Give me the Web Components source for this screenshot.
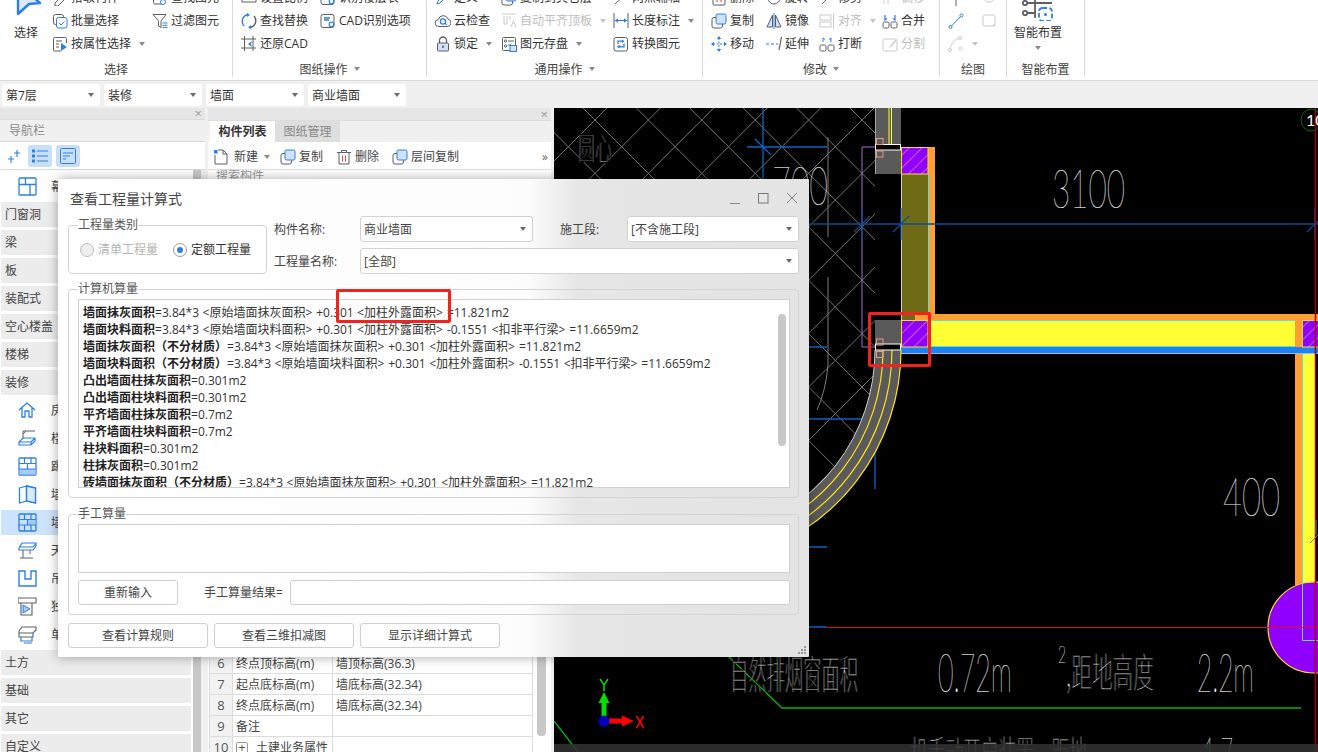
<!DOCTYPE html>
<html lang="zh">
<head>
<meta charset="utf-8">
<title>查看工程量计算式</title>
<style>
  html, body { margin: 0; height: 100%; overflow: hidden; }
  body { background: #f0f0f0; color: #333; font: 12px/17px "Open Sans", "Noto Sans CJK SC", sans-serif; }
  app-shell { width: 1318px; height: 752px; }
</style>
</head>
<body>
<app-shell>
  <x-ribbon slot="ribbon">
    <rb-group label="选择" w="233" pad="0">
      <rb-big w="52" icon="select" text="选择"></rb-big>
      <rb-col w="100">
        <rb-item icon="pick" text="拾取构件"></rb-item>
        <rb-item icon="batch" text="批量选择"></rb-item>
        <rb-item icon="attr" text="按属性选择" caret></rb-item>
      </rb-col>
      <rb-col w="80">
        <rb-item icon="find2" text="查找图元"></rb-item>
        <rb-item icon="filter" text="过滤图元"></rb-item>
      </rb-col>
    </rb-group>
    <rb-group label="图纸操作" w="194" pad="8" caret>
      <rb-col w="79">
        <rb-item icon="scale" text="设置比例"></rb-item>
        <rb-item icon="replace" text="查找替换"></rb-item>
        <rb-item icon="restore" text="还原CAD"></rb-item>
      </rb-col>
      <rb-col w="100">
        <rb-item icon="cadopt" text="识别楼层表"></rb-item>
        <rb-item icon="cadopt" text="CAD识别选项"></rb-item>
      </rb-col>
    </rb-group>
    <rb-group label="通用操作" w="276" pad="8" caret>
      <rb-col w="66">
        <rb-item icon="define" text="定义"></rb-item>
        <rb-item icon="cloud" text="云检查"></rb-item>
        <rb-item icon="lock" text="锁定" caret></rb-item>
      </rb-col>
      <rb-col w="112">
        <rb-item icon="copy" text="复制到其它层"></rb-item>
        <rb-item icon="flush" text="自动平齐顶板" caret disabled></rb-item>
        <rb-item icon="save" text="图元存盘" caret></rb-item>
      </rb-col>
      <rb-col w="85">
        <rb-item icon="axis" text="两点辅轴"></rb-item>
        <rb-item icon="dim" text="长度标注" caret></rb-item>
        <rb-item icon="conv" text="转换图元"></rb-item>
      </rb-col>
    </rb-group>
    <rb-group label="修改" w="237" pad="8" caret>
      <rb-col w="55">
        <rb-item icon="del" text="删除"></rb-item>
        <rb-item icon="copy" text="复制"></rb-item>
        <rb-item icon="move" text="移动"></rb-item>
      </rb-col>
      <rb-col w="53">
        <rb-item icon="rotate" text="旋转"></rb-item>
        <rb-item icon="mirror" text="镜像"></rb-item>
        <rb-item icon="extend" text="延伸"></rb-item>
      </rb-col>
      <rb-col w="63">
        <rb-item icon="trim" text="修剪"></rb-item>
        <rb-item icon="align" text="对齐" caret disabled></rb-item>
        <rb-item icon="break" text="打断"></rb-item>
      </rb-col>
      <rb-col w="50">
        <rb-item icon="offset" text="偏移" disabled></rb-item>
        <rb-item icon="merge" text="合并"></rb-item>
        <rb-item icon="split" text="分割" disabled></rb-item>
      </rb-col>
    </rb-group>
    <rb-group label="绘图" w="67" pad="8">
      <rb-col w="33">
        <rb-item icon="point"></rb-item>
        <rb-item icon="line"></rb-item>
        <rb-item icon="arc" caret disabled></rb-item>
      </rb-col>
      <rb-col w="20">
        <rb-item icon="circle" disabled></rb-item>
        <rb-item icon="rect" disabled></rb-item>
      </rb-col>
    </rb-group>
    <rb-group label="智能布置" w="78" pad="0">
      <rb-big w="62" icon="smart" text="智能布置" caret></rb-big>
    </rb-group>
  </x-ribbon>

  <x-filterbar slot="filters">
    <x-combo>第7层</x-combo>
    <x-combo>装修</x-combo>
    <x-combo>墙面</x-combo>
    <x-combo>商业墙面</x-combo>
  </x-filterbar>

  <x-nav slot="nav"></x-nav>
  <x-parts slot="parts"></x-parts>
  <x-cad slot="cad"></x-cad>

  <x-dialog slot="dialog" style="left:58px;top:179px">
    <div slot="title">查看工程量计算式</div>
    <x-quantity-form></x-quantity-form>
  </x-dialog>

  <x-mark slot="marks" style="left:336px;top:289px;width:115px;height:34px"></x-mark>
  <x-mark slot="marks" style="left:868px;top:312px;width:63px;height:55px"></x-mark>
</app-shell>

<script>
const BLUE = '#2b7fe8';
const DARK = '#5c5f66';
const PALE = '#c9c9c9';

// 16x16 icon bodies. "c" is the neutral colour so disabled items can go pale
const ICONS = {
  select: c => `<path d="M3 31V1l22 19-11 1z" fill="#dbe9fb" stroke="${BLUE}" stroke-width="2.4" stroke-linejoin="round"/>`,
  pick: c => `<path d="M3 13l6-6 3 3-6 6H3z" fill="none" stroke="${c}"/>`,
  newdoc: c => `<path d="M2 6V15h12V5l-4-4H5" fill="none" stroke="${c}"/><path d="M10 1v4h4" fill="none" stroke="${c}"/><path d="M1 1h3.500v3.500H1z" fill="${BLUE}"/>`,
  trash: c => `<path d="M1 3.500h14M5.500 3V1.500h5V3" fill="none" stroke="${c}"/><path d="M3 3.500V15h10V3.500" fill="none" stroke="${c}"/><path d="M6.500 6.500v6M9.500 6.500v6" stroke="#d84a4a"/>`,
  batch: c => `<rect x="1.5" y="1.5" width="10" height="10" rx="2" fill="none" stroke="${c}"/><rect x="4.5" y="4.5" width="10.5" height="10.5" rx="2" fill="#fff" stroke="${BLUE}"/><path d="M7 10l2 2 3.5-3.5" fill="none" stroke="${BLUE}"/>`,
  attr: c => `<path d="M9 15H2.5a1 1 0 0 1-1-1V2.5a1 1 0 0 1 1-1h11a1 1 0 0 1 1 1V7" fill="none" stroke="${c}"/><path d="M4 5h6M4 8h3M4 11h3" stroke="${c}"/><path d="M9 7l6 4-6 4z" fill="${BLUE}"/>`,
  find2: c => `<rect x="1.5" y="3" width="11" height="11" rx="1.5" fill="none" stroke="${c}"/><circle cx="11" cy="12" r="2.5" fill="#fff" stroke="${BLUE}"/>`,
  filter: c => `<path d="M1 1.5h13L9 8v6.5L6.500 13V8z" fill="none" stroke="${c}"/><path d="M10.500 10h5M10.500 12.300h5M10.500 14.600h5" stroke="${BLUE}"/>`,
  scale: c => `<path d="M1 12V4h14v8z" fill="none" stroke="${c}"/>`,
  replace: c => `<path d="M3 13A7 7 0 0 1 7 1.500" fill="none" stroke="${BLUE}" stroke-width="1.400"/><path d="M13 3A7 7 0 0 1 9 14.500" fill="none" stroke="${c}" stroke-width="1.400"/><path d="M6 0l3 2-3 2zM10 12l-3 2.500 3 1.500z" fill="${BLUE}"/>`,
  restore: c => `<path d="M3.500 0v15M0 12h15M0 3h15M12 0v15" stroke="${c}" fill="none"/><path d="M11 5L7 8l4 3-1-3z" fill="${BLUE}"/>`,
  cadopt: c => `<rect x="1" y="1.500" width="13" height="13" rx="2" fill="none" stroke="${c}"/><path d="M4 5h6M4 7h5" stroke="${BLUE}" stroke-width="1.500"/><circle cx="11.500" cy="11.500" r="2.300" fill="#fff" stroke="${BLUE}" stroke-width="1.200"/>`,
  define: c => `<path d="M2 14l3-1 8-8-2-2-8 8z" fill="none" stroke="${BLUE}"/>`,
  cloud: c => `<path d="M4 13.500a3.500 3.500 0 0 1-.6-7A5 5 0 0 1 13 6a3.800 3.800 0 0 1-.5 7.500z" fill="none" stroke="${c}"/><circle cx="8" cy="8.500" r="2.600" fill="none" stroke="${BLUE}" stroke-width="1.300"/><path d="M10 10.500l2 1.500" stroke="${BLUE}"/>`,
  lock: c => `<path d="M4.500 7V4.500a3.500 3.500 0 0 1 7 0V7" fill="none" stroke="${c}" stroke-width="1.300"/><rect x="2.500" y="7" width="11" height="8" rx="1" fill="#cfe2fa" stroke="${c}"/><path d="M8 9.500v2.500" stroke="${DARK}" stroke-width="1.600"/>`,
  flush: c => `<path d="M1 1h14M3 3v8h3V3M9 3v4" fill="none" stroke="${c}"/><path d="M10 14l2.500-6 2.500 6" fill="none" stroke="${c}"/>`,
  save: c => `<rect x="1.500" y="1.500" width="13" height="13" rx="1" fill="none" stroke="${c}"/><circle cx="4.500" cy="5" r="1.200" fill="none" stroke="${c}"/><circle cx="4.500" cy="10" r="1.200" fill="none" stroke="${c}"/><path d="M7 5h6M7 9h3" stroke="${c}"/><rect x="9" y="9.500" width="6.500" height="6" fill="#cfe2fa" stroke="${BLUE}"/>`,
  axis: c => `<path d="M2 14L14 3" stroke="${c}"/>`,
  dim: c => `<path d="M1 0v15M15 0v15" stroke="${c}"/><path d="M2 7.500h12" stroke="${BLUE}"/><path d="M2 7.500l3-2.200v4.400zM14 7.500l-3-2.200v4.400z" fill="${BLUE}"/>`,
  conv: c => `<rect x="1" y="1.500" width="13.500" height="13.500" rx="2" fill="none" stroke="${c}"/><path d="M5 8V5.200h4.500M4.500 10.500H8M11 7.500v3.300H7" fill="none" stroke="${BLUE}" stroke-width="1.300"/><path d="M9 3.500l2.500 1.700L9 7zM6.500 9l-2.500 1.700 2.500 1.800z" fill="${BLUE}"/>`,
  del: c => `<rect x="2" y="3" width="12" height="12" rx="1" fill="none" stroke="${c}"/><path d="M6 6v6M10 6v6" stroke="#e04040"/>`,
  copy: c => `<rect x="1" y="4.500" width="10.500" height="10.500" rx="2" fill="#fff" stroke="${c}"/><rect x="5" y="1" width="10" height="10" rx="1.500" fill="#cfe2fa" stroke="${BLUE}"/>`,
  move: c => `<path d="M8 2v12M2 8h12" stroke="${BLUE}" stroke-dasharray="2 1.500"/><path d="M8 0l2.200 3H5.800zM8 16l2.200-3H5.800zM0 8l3-2.200v4.400zM16 8l-3-2.200v4.400z" fill="${BLUE}"/>`,
  rotate: c => `<circle cx="8" cy="8" r="6" fill="none" stroke="${c}"/>`,
  mirror: c => `<path d="M6.500 2v12H1zM9.500 2v12H15z" fill="#cfe2fa" stroke="${c}"/><path d="M8 0v16" stroke="${BLUE}"/>`,
  extend: c => `<path d="M0 8h3M5 8h3M10 8h2" stroke="${BLUE}"/><path d="M13 14L15.500 1" stroke="${c}" stroke-width="1.200"/>`,
  trim: c => `<path d="M3 14L14 3" stroke="${c}"/>`,
  align: c => `<rect x="1" y="2" width="11" height="5" fill="none" stroke="${c}"/><rect x="1" y="9" width="11" height="5" fill="none" stroke="${c}"/><path d="M14.500 0v16" stroke="${c}"/>`,
  break: c => `<rect x="1" y="9" width="6" height="6" rx="1.500" fill="none" stroke="${c}"/><rect x="9" y="9" width="6" height="6" rx="1.500" fill="none" stroke="${c}"/><path d="M4 6V2l2 1.500M12 6V2l-2 1.500" fill="none" stroke="${BLUE}"/>`,
  offset: c => `<path d="M2 14V3M6 14V3" stroke="${c}"/>`,
  merge: c => `<rect x="1" y="9" width="6" height="6" rx="1.500" fill="none" stroke="${c}"/><rect x="9" y="9" width="6" height="6" rx="1.500" fill="none" stroke="${c}"/><path d="M3 2v5l2-1.500M13 2v5l-2-1.500" fill="none" stroke="${BLUE}" stroke-width="1.200"/>`,
  split: c => `<rect x="1" y="3" width="14" height="12" rx="1.500" fill="none" stroke="${c}"/><path d="M8 11l6-7" stroke="${c}" stroke-width="1.300"/>`,
  point: c => `<path d="M8 10V16" stroke="${c}"/>`,
  line: c => `<path d="M2.500 14L13.500 2.500" stroke="${BLUE}"/><circle cx="2.500" cy="14" r="1.500" fill="#fff" stroke="${BLUE}"/><circle cx="13.500" cy="2.500" r="1.500" fill="#fff" stroke="${BLUE}"/>`,
  arc: c => `<path d="M2 14C3 7 7 3 12 2" fill="none" stroke="${c}"/><circle cx="2" cy="14" r="1.500" fill="#fff" stroke="${c}"/><circle cx="12" cy="2" r="1.500" fill="#fff" stroke="${c}"/><circle cx="12.500" cy="12.500" r="1.500" fill="#fff" stroke="${c}"/>`,
  circle: c => `<circle cx="8" cy="6" r="6" fill="none" stroke="${c}"/>`,
  rect: c => `<rect x="2" y="2" width="12" height="11" rx="2" fill="none" stroke="${c}"/><circle cx="13" cy="12.500" r="1" fill="${c}"/>`,
  smart: c => `<g fill="none" stroke="${c}" stroke-width="1.800"><path d="M5 3h25M13 -2v20M5 13h8"/><circle cx="3" cy="3" r="2.200"/><circle cx="3" cy="13" r="2.200"/></g><rect x="17" y="8" width="13" height="13" rx="3.500" fill="none" stroke="${BLUE}" stroke-width="1.800" stroke-dasharray="4.500 2.300"/><circle cx="23.500" cy="14.500" r="1.500" fill="${BLUE}"/>`
};

function iconSvg(name, w, h, vb, color) {
  return `<svg width="${w}" height="${h}" viewBox="${vb || `0 0 ${w} ${h}`}" style="flex:none;display:block">${ICONS[name](color || DARK)}</svg>`;
}

// small base class: subclasses give css() and html()
class Shadow extends HTMLElement {
  connectedCallback() {
    if (this.shadowRoot) return;
    this.attachShadow({ mode: 'open' });
    this.shadowRoot.innerHTML = `<style>${this.css()}</style>${this.html()}`;
  }
  css() { return ''; }
  html() { return '<slot></slot>'; }
}

const CARET = 'display:inline-block;width:0;height:0;border:3.5px solid transparent;border-top:4px solid #8a8a8a;border-bottom:0;flex:none;';

class AppShell extends Shadow {
  css() {
    return `
      :host { display: flex; flex-direction: column; position: relative; overflow: hidden; background: #f0f0f0; }
      .main { display: flex; height: 644px; }
    `;
  }
  html() {
    return `
      <slot name="ribbon"></slot>
      <slot name="filters"></slot>
      <div class="main">
        <slot name="nav"></slot>
        <slot name="parts"></slot>
        <slot name="cad"></slot>
      </div>
      <slot name="dialog"></slot>
      <slot name="marks"></slot>
    `;
  }
}

class XRibbon extends Shadow {
  css() {
    return `:host { display: flex; height: 81px; flex: none; overflow: hidden; background: #fff; border-bottom: 1px solid #d9d9d9; box-sizing: border-box; font-size: 12px; line-height: 17px; color: #333; }`;
  }
}

class RbGroup extends Shadow {
  css() {
    const w = this.getAttribute('w');
    const pad = this.getAttribute('pad');
    return `
      :host { display: block; width: ${w}px; flex: none; box-sizing: border-box; height: 77px; border-right: 1px solid #d9d9d9; }
      .body { display: flex; height: 54px; padding-left: ${pad}px; }
      .inner { display: flex; margin-top: -14px; height: 69px; }
      .label { height: 18px; margin-top: 6px; display: flex; justify-content: center; align-items: center; gap: 6px; color: #444; }
      i { ${CARET} }
    `;
  }
  html() {
    const caret = this.hasAttribute('caret') ? '<i></i>' : '';
    return `<div class="body"><div class="inner"><slot></slot></div></div><div class="label">${this.getAttribute('label')}${caret}</div>`;
  }
}

class RbCol extends Shadow {
  css() { return `:host { display: flex; flex-direction: column; flex: none; width: ${this.getAttribute('w')}px; }`; }
}

class RbItem extends Shadow {
  css() {
    const off = this.hasAttribute('disabled');
    return `
      :host { display: flex; align-items: center; height: 23px; gap: 3px; white-space: nowrap; color: ${off ? '#bdbdbd' : '#333'}; }
      i { ${CARET} margin-left: 5px; ${off ? 'border-top-color:#c4c4c4;' : ''} }
    `;
  }
  html() {
    const off = this.hasAttribute('disabled');
    const text = this.getAttribute('text') || '';
    return `${iconSvg(this.getAttribute('icon'), 16, 16, null, off ? PALE : DARK)}${text ? `<span>${text}</span>` : ''}${this.hasAttribute('caret') ? '<i></i>' : ''}`;
  }
}

class RbBig extends Shadow {
  css() {
    return `
      :host { display: flex; flex-direction: column; align-items: center; flex: none; width: ${this.getAttribute('w')}px; white-space: nowrap; }
      .pic { height: 38px; display: flex; align-items: flex-end; }
      .pic.sel { padding: 0 0 8px 6px; height: 30px; }
      .pic.smart { padding-bottom: 3px; height: 35px; }
      span { display: block; height: 17px; }
      i { ${CARET} margin-top: 5px; }
    `;
  }
  html() {
    const smart = this.getAttribute('icon') === 'smart';
    const svg = smart ? iconSvg('smart', 32, 22, '0 -1 32 22') : iconSvg('select', 28, 33, '0 0 28 33');
    return `<div class="pic ${smart ? 'smart' : 'sel'}">${svg}</div><span>${this.getAttribute('text')}</span>${this.hasAttribute('caret') ? '<i></i>' : ''}`;
  }
}

class XFilterbar extends Shadow {
  css() { return `:host { display: flex; gap: 4px; height: 27px; box-sizing: border-box; padding: 3px 0 0 2px; background: #f0f0f0; flex: none; } ::slotted(x-combo) { width: 98px; }`; }
}

class XCombo extends Shadow {
  css() {
    return `
      :host { display: flex; align-items: center; justify-content: space-between; box-sizing: border-box; height: 22px; padding: 0 6px 0 4px; background: #fff; border-radius: 3px; color: #333; white-space: nowrap; flex: none; }
      :host([framed]) { border: 1px solid #d2d2d2; height: 26px; padding-left: 3px; color: #444; }
      i { border: 3px solid transparent; border-top: 4px solid #6c6c6c; border-bottom: 0; width: 0; height: 0; }
    `;
  }
  html() { return '<span><slot></slot></span><i></i>'; }
}

class XNavRow extends Shadow {
  css() {
    return `
      :host { display: flex; align-items: center; height: 25px; box-sizing: border-box; flex: none; white-space: nowrap; color: #444; padding-left: 4px; background: #ececec; }
      :host([sub]) { background: transparent; padding-left: 17px; gap: 14px; }
      :host([selected]) { background: #cde3fb; }
    `;
  }
  html() {
    return `<slot name="icon"></slot><slot></slot>`;
  }
}

const NAV_ICONS = {
  grid: `<rect x="1" y="1" width="17" height="17" rx="1" fill="none" stroke="${BLUE}" stroke-width="1.300"/><path d="M1 7.500h17M7.500 1v6.500M12 7.500V18" stroke="${BLUE}" stroke-width="1.300"/>`,
  house: `<path d="M1 9l8-7 8 7M4 7v9h3v-6h4v6h3V7" fill="none" stroke="${BLUE}" stroke-width="1.300"/>`,
  floor: `<path d="M1 16v-3l4-4h12v3l-4 4zM1 13h12v3M13 13l4-4" fill="none" stroke="${BLUE}" stroke-width="1.200"/><path d="M5 9V2h12M5 5l3-3" fill="none" stroke="${DARK}"/>`,
  skirt: `<rect x="1" y="1" width="17" height="17" rx="1" fill="none" stroke="${BLUE}" stroke-width="1.300"/><rect x="1.500" y="12" width="16" height="5.500" fill="#a8c9f2"/><path d="M1 6.500h17M1 12h17M6.500 1v5.500M13 1v5.500M9.500 6.500V12" stroke="${BLUE}" stroke-width="1.200"/>`,
  book: `<path d="M1.500 3l7-2v15l-7 2zM8.500 1l9 2v15l-9-2z" fill="none" stroke="${BLUE}" stroke-width="1.300"/><path d="M8.500 1l9 2v15l-9-2z" fill="#dbe9fb" stroke="${BLUE}" stroke-width="1.300"/>`,
  brick: `<rect x="1" y="1" width="17" height="17" rx="1" fill="none" stroke="${BLUE}" stroke-width="1.300"/><rect x="9.500" y="6.500" width="8" height="5.500" fill="#a8c9f2"/><path d="M1 6.500h17M1 12h17M6.500 1v5.500M13 1v5.500M9.500 6.500V12M6.500 12v6M13 12v6" stroke="${BLUE}" stroke-width="1.200"/>`,
  ceil: `<path d="M1 7l3-5h14v3l-3 4H1zM1 6h14l3-4" fill="none" stroke="${BLUE}" stroke-width="1.200"/><path d="M5 9v8M2 17h13M12 9v4" fill="none" stroke="${DARK}"/>`,
  drop: `<path d="M1 2h6v8h6V2h5v15H1z" fill="none" stroke="${BLUE}" stroke-width="1.400"/>`,
  column: `<path d="M0 1h18v5H0zM3 6v12h11V6" fill="none" stroke="${DARK}" stroke-width="1.100"/><path d="M5 8v8l7-4z" fill="#a8c9f2" stroke="${BLUE}"/>`,
  beam: `<path d="M1 6l3-4h14v3l-3 3H1zM1 8v4h14v-4" fill="none" stroke="${DARK}" stroke-width="1.100"/><path d="M3 12v4h11v-4M6 18h8" fill="none" stroke="${BLUE}" stroke-width="1.200"/>`
};

class XNav extends Shadow {
  css() {
    return `
      :host { display: flex; flex-direction: column; width: 205px; flex: none; background: #f0f0f0; overflow: hidden; }
      .strip { height: 11px; flex: none; background: #e6e6e6; border-bottom: 1px solid #dcdcdc; display: flex; justify-content: flex-end; align-items: center; padding-right: 3px; color: #9a9a9a; font-size: 13px; line-height: 11px; }
      .title { height: 21px; flex: none; display: flex; align-items: center; padding-left: 9px; color: #8b8b8b; background: #f0f0f0; border-bottom: 1px solid #d9d9d9; }
      .tools { height: 28px; flex: none; display: flex; align-items: center; gap: 4px; padding-left: 6px; background: #fff; border-bottom: 1px solid #d9d9d9; box-sizing: border-box; }
      .tools div { width: 24px; height: 22px; display: flex; justify-content: center; align-items: center; border-radius: 3px; }
      .tools .on { background: #c8dff6; }
      .body { flex: 1; display: flex; min-height: 0; background: #fff; }
      .rows { width: 190px; margin-left: 1px; flex: none; display: flex; flex-direction: column; gap: 3px; padding-top: 4px; overflow: hidden; }
      .track { margin-left: 2px; width: 8px; background: #c8c8c8; }
      .end { flex: 1; background: #f0f0f0; }
    `;
  }
  html() {
    const heads = ['门窗洞', '梁', '板', '装配式', '空心楼盖', '楼梯', '装修'];
    const items = [['house', '房间'], ['floor', '楼地面'], ['skirt', '踢脚'], ['book', '墙裙'], ['brick', '墙面', 1], ['ceil', '天棚'], ['drop', '吊顶'], ['column', '独立柱装修'], ['beam', '单梁装修']];
    const tails = ['土方', '基础', '其它', '自定义'];
    const subRow = ([ic, t, sel]) => `<x-nav-row sub ${sel ? 'selected' : ''}><svg slot="icon" width="19" height="19" viewBox="0 0 19 19">${NAV_ICONS[ic]}</svg>${t}</x-nav-row>`;
    const head = t => `<x-nav-row>${t}</x-nav-row>`;
    return `
      <div class="strip">×</div>
      <div class="title">导航栏</div>
      <div class="tools">
        <svg width="18" height="18" viewBox="0 0 18 18"><path d="M11 3v7M8 6h6M5 9v7M2 12h6" stroke="${BLUE}" stroke-width="1.100" fill="none"/></svg>
        <div class="on"><svg width="16" height="14" viewBox="0 0 16 14"><path d="M5 2h11M5 7h11M5 12h11" stroke="${BLUE}"/><rect x=".5" y="1" width="2" height="2" fill="none" stroke="${BLUE}"/><rect x=".5" y="6" width="2" height="2" fill="none" stroke="${BLUE}"/><rect x=".5" y="11" width="2" height="2" fill="none" stroke="${BLUE}"/></svg></div>
        <div class="on"><svg width="16" height="16" viewBox="0 0 16 16"><rect x=".5" y=".5" width="15" height="15" rx="1" fill="none" stroke="${BLUE}"/><path d="M3 5h10M3 8h7M3 11h3" stroke="${BLUE}"/></svg></div>
      </div>
      <div class="body">
        <div class="rows">
          ${subRow(['grid', '幕墙'])}
          ${heads.map(head).join('')}
          ${items.map(subRow).join('')}
          ${tails.map(head).join('')}
        </div>
        <div class="track"></div>
        <div class="end"></div>
      </div>
    `;
  }
}

class XParts extends Shadow {
  css() {
    return `
      :host { display: flex; flex-direction: column; width: 349px; padding: 0 3px; box-sizing: border-box; flex: none; background: #f0f0f0; overflow: hidden; color: #444; }
      .strip { height: 12px; flex: none; background: #e6e6e6; display: flex; justify-content: flex-end; align-items: center; padding-right: 3px; color: #9a9a9a; font-size: 13px; line-height: 11px; }
      .tabs { display: flex; height: 22px; flex: none; padding-left: 2px; background: #f0f0f0; border-top: 1px solid #dcdcdc; box-sizing: border-box; }
      .tabs div { width: 65px; display: flex; align-items: center; justify-content: center; }
      .tabs .on { background: #fff; font-weight: 700; color: #333; }
      .tabs .off { background: #dedede; color: #888; }
      .white { background: #fff; display: flex; flex-direction: column; height: 610px; overflow: hidden; }
      .tools { height: 28px; flex: none; display: flex; align-items: center; padding: 2px 0 0 5px; box-sizing: border-box; border-bottom: 1px solid #e2e2e2; white-space: nowrap; }
      .tools span { display: flex; align-items: center; gap: 3px; margin-right: 13px; }
      .tools span.first { gap: 5px; margin-right: 10px; }
      .tools i { ${CARET} margin-left: 1px; }
      .tools em { margin-left: auto; font-style: normal; color: #666; margin-right: 3px; }
      .search { height: 12px; padding-left: 8px; color: #999; line-height: 12px; flex: none; overflow: hidden; }
      .fill { height: 470px; flex: none; }
      .bottom { display: flex; gap: 4px; padding-left: 1px; }
      table { border-collapse: collapse; table-layout: fixed; width: 324px; flex: none; }
      td { height: 20px; padding: 0 0 0 3px; border: 1px solid #dcdcdc; white-space: nowrap; overflow: hidden; color: #444; }
      td:first-child { background: #f2f2f2; text-align: center; padding: 0; color: #555; font-size: 13px; }
      .plus { display: inline-block; width: 10px; height: 10px; border: 1px solid #999; border-radius: 2px; line-height: 9px; text-align: center; margin-right: 8px; }
      .bar { width: 9px; height: 84px; flex: none; background: #c8c8c8; border-radius: 0 0 4px 4px; }
    `;
  }
  html() {
    const rows = [['6', '终点顶标高(m)', '墙顶标高(36.3)'], ['7', '起点底标高(m)', '墙底标高(32.34)'], ['8', '终点底标高(m)', '墙底标高(32.34)'], ['9', '备注', ''], ['10', '<span class="plus">+</span>土建业务属性', '']];
    return `
      <div class="strip">×</div>
      <div class="tabs"><div class="on">构件列表</div><div class="off">图纸管理</div></div>
      <div class="white">
        <div class="tools">
          <span class="first">${iconSvg('newdoc', 16, 16)}新建<i></i></span>
          <span>${iconSvg('copy', 16, 16)}复制</span>
          <span>${iconSvg('trash', 16, 16)}删除</span>
          <span>${iconSvg('copy', 16, 16)}层间复制</span>
          <em>»</em>
        </div>
        <div class="search">搜索构件</div>
        <div class="fill"></div>
        <div class="bottom">
          <table><colgroup><col style="width:23px"><col style="width:100px"><col></colgroup>
            ${rows.map(r => `<tr><td>${r[0]}</td><td>${r[1]}</td><td>${r[2]}</td></tr>`).join('')}
          </table>
          <div class="bar"></div>
        </div>
      </div>
    `;
  }
}

class XCad extends Shadow {
  css() {
    return `
      :host { display: block; flex: 1; min-width: 0; background: #000; position: relative; overflow: hidden; }
      svg { display: block; }
      text { font-family: Lato, "Noto Sans CJK SC", sans-serif; }
    `;
  }
  html() {
    // scene is written in page coordinates, origin of the view is at 554,108
    let lines = '';
    for (let k = -8; k < 16; k++) {
      const a = 715 + 53.4 * k, b = 475 + 53.4 * k;
      lines += `M${a - 108} 108L${a - 600} 600M${b + 108} 108L${b + 600} 600`;
    }
    const arc = (r, ang) => {
      const t = ang * Math.PI / 180;
      return `M${686 + r} 350A${r} ${r} 0 0 1 ${(686 + r * Math.cos(t)).toFixed(1)} ${(350 + r * Math.sin(t)).toFixed(1)}`;
    };
    const cadText = (x, y, fs, w, s) => `<text x="${x}" y="${y}" font-size="${fs}" textLength="${w}" lengthAdjust="spacingAndGlyphs" fill="#f2f2f2" stroke="#f2f2f2" stroke-width=".2" font-weight="100">${s}</text>`;
    const cjk = (x, y, fs, w, s) => `<text x="${x}" y="${y}" font-size="${fs}" textLength="${w}" lengthAdjust="spacingAndGlyphs" fill="#f2f2f2" stroke="#000" stroke-width="1.100" style="font-family:'Noto Sans CJK SC',sans-serif" font-weight="300">${s}</text>`;
    const tick = (x, y) => `<path d="M${x} ${y - 16}V${y + 16}M${x - 8} ${y + 8}L${x + 8} ${y - 8}"/>`;
    const pinks = (y1, y2) => `<g fill="none" stroke="#e89a80"><rect x="876.500" y="${y1}" width="6.500" height="6"/><rect x="876.500" y="${y2}" width="6.500" height="6"/></g>`;
    return `
    <svg width="764" height="644" viewBox="554 108 764 644" xmlns="http://www.w3.org/2000/svg">
      <defs>
        <pattern id="ph" width="9" height="9" patternUnits="userSpaceOnUse" patternTransform="rotate(45)">
          <rect width="9" height="9" fill="#8f00ff"/><path d="M0 0V9" stroke="#f08ab0" stroke-width="1.300"/>
        </pattern>
        <clipPath id="cross"><path d="M554 108H875V350A189 189 0 0 1 554 485z"/></clipPath>
      </defs>
      <rect x="554" y="108" width="764" height="644" fill="#000"/>
      <path d="${lines}" stroke="#777" stroke-width="1" fill="none" clip-path="url(#cross)"/>

      <g fill="none" stroke="#0f63c4" stroke-width="1.300">
        <path d="M747 147H827M763 108V180M755 139L771 155M809 347H827M747 419H880M875 400V489M747 547H827M747 627H827"/>
      </g>
      <path d="M868 427L882 411" stroke="#0f63c4"/>
      <g fill="none" stroke="#7d7d7d"><path d="M828 137V237M828 277V365Q826 390 817 410"/></g>
      <path d="M862 147V347H875M862 147H875" fill="none" stroke="#9b6fd6"/>

      <!-- upper wall stub -->
      <rect x="875" y="108" width="26" height="66" fill="#5a5a5a"/>
      <path d="M889 108V147M891.500 108V147" stroke="#ffff33" fill="none"/>
      <path d="M875.500 108V174" stroke="#a8a8a8"/>
      <rect x="875.500" y="144.500" width="25" height="5.500" fill="#000" stroke="#fff"/>
      ${pinks(138.500, 151)}
      <rect x="928" y="147" width="7" height="168" fill="#ff9f33"/>
      <rect x="901" y="174" width="27" height="146" fill="#6f6a16"/>
      <rect x="901.500" y="147.500" width="26.500" height="26.500" fill="url(#ph)" stroke="#ffe11a"/>
      <path d="M901.500 174V345" stroke="#cfcfcf"/>
      <path d="M928.500 174V320" stroke="#4fe3e3"/>

      <!-- horizontal wall -->
      <rect x="915" y="314" width="403" height="6" fill="#ff9f33"/>
      <rect x="928" y="320" width="367" height="27" fill="#ffff33"/>
      <path d="M928 320.500H1295M928 346.500H1318" stroke="#4fe3e3"/>
      <rect x="1295" y="320" width="7" height="265" fill="#ff9f33"/>
      <rect x="1302" y="354" width="13" height="240" fill="#ffff33"/>
      <rect x="901" y="347" width="417" height="7" fill="#1f80f0"/>
      <path d="M901 353.500H1318" stroke="#8fbcf5"/>
      <rect x="875" y="320" width="26" height="24" fill="#5a5a5a"/>
      <rect x="901.500" y="320.500" width="26.500" height="26.500" fill="url(#ph)" stroke="#ffe11a"/>
      <rect x="1302.500" y="320.500" width="16" height="26.500" fill="url(#ph)" stroke="#ffe11a"/>

      <!-- curved wall -->
      <path d="${arc(202, 75)}" fill="none" stroke="#5a5a5a" stroke-width="26"/>
      <path d="${arc(215, 75)}" fill="none" stroke="#ffe11a" stroke-width="1.200"/>
      <path d="${arc(206, 75)}" fill="none" stroke="#ffe11a" stroke-width="1.200"/>
      <path d="${arc(197, 75)}" fill="none" stroke="#ffe11a" stroke-width="1.200"/>
      <path d="${arc(189, 75)}" fill="none" stroke="#cfcfcf" stroke-width="1"/>
      <rect x="875.500" y="344" width="25" height="6" fill="#000" stroke="#fff"/>
      ${pinks(339, 351.500)}

      <!-- dimension line -->
      <path d="M809 224H1318" stroke="#0b4c94" stroke-width="1.400"/>
      <g stroke="#0b4c94" stroke-width="1.200" fill="none">${tick(862, 224)}${tick(901, 224)}${tick(1315, 224)}</g>

      <!-- column on the right -->
      <path d="M1302.500 354V640.500H1318" fill="none" stroke="#4fe3e3"/>
      <ellipse cx="1314" cy="627.500" rx="46" ry="45.500" fill="#8f00ff" stroke="#ffe11a" stroke-width="1.200"/>
      <path d="M1302.500 582V640.500H1318" fill="none" stroke="#4fe3e3"/>
      <path d="M827 627.500H1318" stroke="#e01010" stroke-width="1.200"/>
      <path d="M1315.500 108V752" stroke="#a00000" stroke-width="1.500"/>
      <ellipse cx="1311" cy="120" rx="10" ry="11" fill="none" stroke="#0a6a0a"/>
      <text x="1306" y="126" font-size="16" fill="#fff">10</text>
      <path d="M1310 543L1318 535M1316 520V535" fill="none" stroke="#3d8f9f"/>

      <!-- green lines -->
      <path d="M729 657L782 708H1301M554 721L578 752" fill="none" stroke="#0cb30c" stroke-width="1.300"/>

      <!-- annotation text -->
      ${cadText(1052, 208, 54, 73, '3100')}
      ${cadText(1223, 516, 54, 57, '400')}
      ${cadText(772, 205, 54, 56, '700')}
      ${cadText(938, 692, 54, 74, '0.72m')}
      ${cadText(1197, 692, 54, 57, '2.2m')}
      ${cadText(1058, 663, 24, 8, '2')}
      ${cjk(578, 160, 32, 34, '圆心')}
      ${cjk(730, 689, 40, 128, '自然排烟窗面积')}
      ${cjk(1066, 687, 40, 88, ',距地高度')}
      ${cjk(910, 770, 40, 177, '机手动开启装置，距地')}
      ${cadText(1203, 776, 54, 30, '1.7')}

      <!-- coordinate gizmo -->
      <path d="M604 720V700" stroke="#00e000" stroke-width="5"/>
      <path d="M604 692l5.500 11h-11z" fill="#00e000"/>
      <path d="M609 721H622" stroke="#ff0000" stroke-width="5"/>
      <path d="M634 721l-12-5.500v11z" fill="#ff0000"/>
      <circle cx="604" cy="721" r="5.500" fill="#0000c0"/>
      <path d="M600 679l4 6 4-6M604 685v6" fill="none" stroke="#00e000" stroke-width="1.500"/>
      <path d="M636.500 716l7 12M643.500 716l-7 12" fill="none" stroke="#ff0000" stroke-width="1.500"/>

      <rect x="554" y="744" width="764" height="8" fill="#333" opacity=".85"/>
    </svg>`;
  }
}

class XDialog extends Shadow {
  css() {
    return `
      :host { position: absolute; display: block; width: 751px; height: 478px; box-sizing: border-box; border-radius: 1px;
        background: linear-gradient(to right, #fff 0, #fcfcfc 470px, #e6e6e6 520px, #e4e4e4 100%);
        box-shadow: 0 0 12px rgba(0,0,0,.35); color: #444; }
      .bar { display: flex; align-items: center; height: 37px; padding: 1px 0 0 12px; box-sizing: border-box; }
      .title { font-size: 14px; color: #444; }
      .win { margin-left: auto; display: flex; align-items: center; margin-right: 11px; }
      .win svg:nth-child(1) { margin-right: 18px; }
      .win svg:nth-child(2) { margin-right: 17px; }
      .grip { position: absolute; right: 2px; bottom: 2px; }
    `;
  }
  html() {
    return `
      <div class="bar">
        <div class="title"><slot name="title"></slot></div>
        <div class="win">
          <svg width="10" height="11" viewBox="0 0 10 11"><path d="M0 10.500h10" stroke="#888"/></svg>
          <svg width="11" height="11" viewBox="0 0 11 11"><rect x=".5" y=".5" width="9.500" height="9.500" fill="none" stroke="#777"/></svg>
          <svg width="12" height="12" viewBox="0 0 12 12"><path d="M1 1l10 10M11 1L1 11" stroke="#888"/></svg>
        </div>
      </div>
      <slot></slot>
      <svg class="grip" width="10" height="10" viewBox="0 0 10 10" fill="#999"><path d="M7 1h2v2H7zM4 4h2v2H4zM7 4h2v2H7zM1 7h2v2H1zM4 7h2v2H4zM7 7h2v2H7z"/></svg>
    `;
  }
}

class XGroupbox extends Shadow {
  css() {
    return `
      :host { display: block; position: relative; box-sizing: border-box; border: 1px solid #d3d3d3; border-radius: 4px; flex: none; }
      .legend { position: absolute; left: 9px; top: -10px; height: 17px; line-height: 17px; background: #fff; color: #555; white-space: nowrap; }
    `;
  }
  html() { return `<div class="legend">${this.getAttribute('legend')}</div><slot></slot>`; }
}

class XBtn extends Shadow {
  css() {
    return `:host { display: flex; align-items: center; justify-content: center; box-sizing: border-box; height: 25px; border: 1px solid #cfcfcf; border-radius: 3px; background: #fff; color: #444; flex: none; white-space: nowrap; }`;
  }
}

class XRadio extends Shadow {
  css() {
    return `
      :host { display: flex; align-items: center; gap: 4px; white-space: nowrap; color: #333; flex: none; }
      :host([disabled]) { color: #b5b5b5; }
      b { width: 12px; height: 12px; border-radius: 50%; border: 1px solid #999; display: flex; align-items: center; justify-content: center; box-sizing: content-box; background: #fff; }
      :host([disabled]) b { background: #eee; border-color: #bbb; }
      :host([checked]) b::after { content: ""; width: 6px; height: 6px; border-radius: 50%; background: #2b7fe8; }
    `;
  }
  html() { return '<b></b><span><slot></slot></span>'; }
}

const FORMULAS = [
  ['墙面抹灰面积', '=3.84*3<原始墙面抹灰面积>+0.301<加柱外露面积>=11.821m2'],
  ['墙面块料面积', '=3.84*3<原始墙面块料面积>+0.301<加柱外露面积>-0.1551<扣非平行梁>=11.6659m2'],
  ['墙面抹灰面积（不分材质）', '=3.84*3<原始墙面抹灰面积>+0.301<加柱外露面积>=11.821m2'],
  ['墙面块料面积（不分材质）', '=3.84*3<原始墙面块料面积>+0.301<加柱外露面积>-0.1551<扣非平行梁>=11.6659m2'],
  ['凸出墙面柱抹灰面积', '=0.301m2'],
  ['凸出墙面柱块料面积', '=0.301m2'],
  ['平齐墙面柱抹灰面积', '=0.7m2'],
  ['平齐墙面柱块料面积', '=0.7m2'],
  ['柱块料面积', '=0.301m2'],
  ['柱抹灰面积', '=0.301m2'],
  ['砖墙面抹灰面积（不分材质）', '=3.84*3<原始墙面抹灰面积>+0.301<加柱外露面积>=11.821m2']
];

class XFormulaBox extends Shadow {
  css() {
    return `
      :host { display: block; position: relative; box-sizing: border-box; width: 712px; height: 189px; margin: 9px 0 0 9px; background: #fff; border: 1px solid #cfcfcf; overflow: hidden; color: #333; }
      .text { padding: 4px 0 0 4px; }
      .line { height: 17px; white-space: nowrap; line-height: 17px; }
      b { color: #222; }
      u { text-decoration: none; margin-left: 3.500px; }
      s { text-decoration: none; margin-right: 3.900px; }
      .bar { position: absolute; left: 699px; top: 14px; width: 8px; height: 132px; background: #c8c8c8; border-radius: 4px; }
    `;
  }
  html() {
    // the angle brackets get side bearings, the reference's UI font has them built in
    const fmt = s => s.replace(/[<>]/g, m => m === '<' ? '<u>&lt;</u>' : '<s>&gt;</s>');
    return `<div class="text">${FORMULAS.map(f => `<div class="line"><b>${f[0]}</b>${fmt(f[1])}</div>`).join('')}</div><div class="bar"></div>`;
  }
}

class XQuantityForm extends Shadow {
  css() {
    return `
      :host { display: block; padding-left: 10px; }
      .top { display: flex; height: 58px; }
      .kind { width: 199px; height: 49px; margin-top: 9px; }
      .radios { display: flex; gap: 15px; padding: 15px 0 0 11px; }
      .fields { margin-left: 7px; display: grid; grid-template-columns: 86px 173px 94px 172px; grid-template-rows: 26px 26px; row-gap: 6px; align-items: center; }
      .wide { grid-column: 2 / 5; }
      .lbl2 { padding-left: 27px; }
      .calc { width: 731px; height: 209px; margin-top: 15px; }
      .manual { width: 731px; height: 101px; margin-top: 16px; padding: 9px 0 0 9px; }
      .area { width: 712px; height: 49px; box-sizing: border-box; background: #fff; border: 1px solid #cfcfcf; }
      .row { display: flex; align-items: center; margin-top: 7px; height: 25px; }
      .row x-btn { width: 100px; }
      .res { margin-left: 26px; width: 86px; white-space: nowrap; }
      .input { width: 500px; height: 25px; box-sizing: border-box; background: #fff; border: 1px solid #cfcfcf; border-radius: 3px; }
      .foot { display: flex; gap: 6px; margin-top: 8px; }
      .foot x-btn { width: 140px; }
    `;
  }
  html() {
    return `
      <div class="top">
        <x-groupbox class="kind" legend="工程量类别">
          <div class="radios">
            <x-radio disabled>清单工程量</x-radio>
            <x-radio checked>定额工程量</x-radio>
          </div>
        </x-groupbox>
        <div class="fields">
          <span>构件名称:</span><x-combo framed>商业墙面</x-combo>
          <span class="lbl2">施工段:</span><x-combo framed>[不含施工段]</x-combo>
          <span>工程量名称:</span><x-combo framed class="wide">[全部]</x-combo>
        </div>
      </div>
      <x-groupbox class="calc" legend="计算机算量"><x-formula-box></x-formula-box></x-groupbox>
      <x-groupbox class="manual" legend="手工算量">
        <div class="area"></div>
        <div class="row">
          <x-btn>重新输入</x-btn>
          <span class="res">手工算量结果=</span>
          <div class="input"></div>
        </div>
      </x-groupbox>
      <div class="foot">
        <x-btn>查看计算规则</x-btn>
        <x-btn>查看三维扣减图</x-btn>
        <x-btn>显示详细计算式</x-btn>
      </div>
    `;
  }
}

class XMark extends Shadow {
  css() { return `:host { position: absolute; display: block; box-sizing: border-box; border: 3px solid #f4221c; border-radius: 2px; }`; }
  html() { return ''; }
}

customElements.define('app-shell', AppShell);
customElements.define('x-ribbon', XRibbon);
customElements.define('rb-group', RbGroup);
customElements.define('rb-col', RbCol);
customElements.define('rb-item', RbItem);
customElements.define('rb-big', RbBig);
customElements.define('x-filterbar', XFilterbar);
customElements.define('x-combo', XCombo);
customElements.define('x-nav-row', XNavRow);
customElements.define('x-nav', XNav);
customElements.define('x-parts', XParts);
customElements.define('x-cad', XCad);
customElements.define('x-dialog', XDialog);
customElements.define('x-groupbox', XGroupbox);
customElements.define('x-btn', XBtn);
customElements.define('x-radio', XRadio);
customElements.define('x-formula-box', XFormulaBox);
customElements.define('x-quantity-form', XQuantityForm);
customElements.define('x-mark', XMark);
</script>
</body>
</html>
